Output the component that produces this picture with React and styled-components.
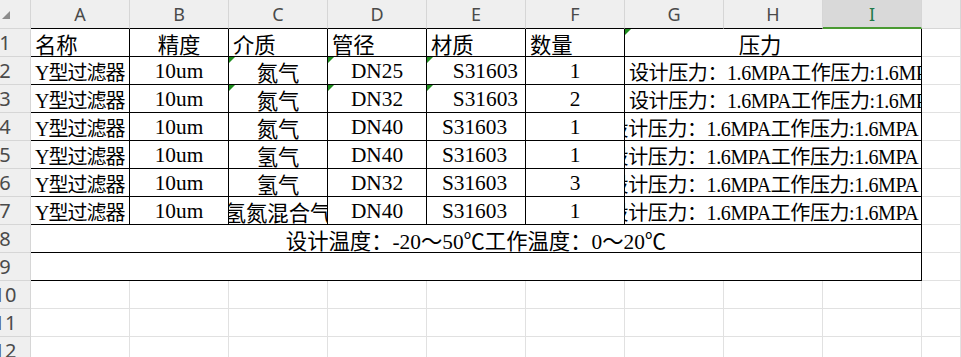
import { Fragment } from 'react'
import styled, { createGlobalStyle, css } from 'styled-components'

const GlobalStyle = createGlobalStyle`
  html, body {
    margin: 0;
    padding: 0;
    background: #fff;
    overflow: hidden;
  }
`

const COLUMNS = ['A', 'B', 'C', 'D', 'E', 'F', 'G', 'H', 'I']
const ACTIVE_COLUMN = 'I'
const PRESSURE = '设计压力：1.6MPA工作压力:1.6MPA'
const TEMPERATURE = '设计温度：-20～50℃工作温度：0～20℃'

const ITEMS = [
  { medium: '氮气', size: 'DN25', qty: '1', asText: true },
  { medium: '氮气', size: 'DN32', qty: '2', asText: true },
  { medium: '氮气', size: 'DN40', qty: '1' },
  { medium: '氢气', size: 'DN40', qty: '1' },
  { medium: '氢气', size: 'DN32', qty: '3' },
  { medium: '氢氮混合气', size: 'DN40', qty: '1' },
]

const justify = { left: 'flex-start', center: 'center', right: 'flex-end' }

export default function App() {
  return (
    <>
      <GlobalStyle />
      <Sheet>
        <Corner>
          <svg width="8" height="8" viewBox="0 0 8 8">
            <polygon points="8,0 8,8 0,8" fill="#8c8c8c" />
          </svg>
        </Corner>
        {COLUMNS.map(c => (
          <ColumnHeader key={c} $active={c === ACTIVE_COLUMN}>{c}</ColumnHeader>
        ))}
        <ColumnHeader $outside />

        <RowHeader>1</RowHeader>
        <Cell>名称</Cell>
        <Cell $align="center">精度</Cell>
        <Cell>介质</Cell>
        <Cell>管径</Cell>
        <Cell>材质</Cell>
        <Cell>数量</Cell>
        <Cell $span={3} $align="center" $shift={30} $flag>压力</Cell>
        <Blank />

        {ITEMS.map((item, i) => (
          <Fragment key={i}>
            <RowHeader>{i + 2}</RowHeader>
            <Cell $small $tight={1}>Y型过滤器</Cell>
            <Cell $align="center">10um</Cell>
            <Cell $align="center" $flag={item.asText}><span>{item.medium}</span></Cell>
            <Cell $align="center" $flag={item.asText}>{item.size}</Cell>
            <Cell $align={item.asText ? 'right' : 'center'} $shift={7} $flag={item.asText}>S31603</Cell>
            <Cell $align="center">{item.qty}</Cell>
            <Cell
              $span={3}
              $small
              $tight={0.4}
              $align={item.asText ? 'left' : 'center'}
              $shift={item.asText ? 4 : 23}
            >
              <span>{PRESSURE}</span>
            </Cell>
            <Blank />
          </Fragment>
        ))}

        <RowHeader>8</RowHeader>
        <Cell $span={9} $align="center">{TEMPERATURE}</Cell>
        <Blank />

        <RowHeader>9</RowHeader>
        <Cell $span={9} />
        <Blank />

        {[10, 11, 12].map(n => (
          <Fragment key={n}>
            <RowHeader>{n}</RowHeader>
            {COLUMNS.map(c => <Blank key={c} />)}
            <Blank />
          </Fragment>
        ))}
      </Sheet>
    </>
  )
}

const Sheet = styled.div`
  display: grid;
  grid-template-columns: 31px repeat(9, 99px) 1fr;
  grid-template-rows: 29px repeat(12, 28px);
  width: 961px;
  height: 357px;
  overflow: hidden;
  background: #fff;
`

const Corner = styled.div`
  box-sizing: border-box;
  padding: 11px 0 0 2px;
  background: #efefef;
  border-right: 1px solid #d6d6d6;
  border-bottom: 1px solid #d6d6d6;

  svg {
    display: block;
  }
`

const ColumnHeader = styled.div`
  box-sizing: border-box;
  display: flex;
  align-items: center;
  justify-content: center;
  background: ${p => (p.$active ? '#d9d9d9' : '#efefef')};
  border-right: 1px solid #d6d6d6;
  border-bottom: ${p =>
    p.$active ? '2px solid #4a9a32' : p.$outside ? '1px solid #d6d6d6' : '1px solid #000'};
  padding-top: ${p => (p.$active ? 1 : 0)}px;
  font-family: "Noto Sans", "Liberation Sans", sans-serif;
  font-size: 18px;
  color: ${p => (p.$active ? '#1f7a4a' : '#4a4a4a')};
`

const RowHeader = styled.div`
  box-sizing: border-box;
  display: flex;
  align-items: center;
  justify-content: center;
  padding-right: 20px;
  overflow: hidden;
  white-space: nowrap;
  background: #efefef;
  border-right: 1px solid #d6d6d6;
  border-bottom: 1px solid #d6d6d6;
  font-family: "Noto Sans", "Liberation Sans", sans-serif;
  font-size: 20px;
  color: #4a4a4a;
`

const Cell = styled.div`
  grid-column: span ${p => p.$span || 1};
  position: relative;
  box-sizing: border-box;
  display: flex;
  align-items: center;
  justify-content: ${p => justify[p.$align || 'left']};
  padding: 1px ${p => p.$shift ?? 4}px 0 4px;
  overflow: hidden;
  white-space: nowrap;
  border-right: 1px solid #000;
  border-bottom: 1px solid #000;
  font-family: "Liberation Serif", "Noto Sans CJK SC", serif;
  font-size: ${p => (p.$small ? '20px' : '21.33px')};
  letter-spacing: ${p => (p.$tight ? `-${p.$tight}px` : 'normal')};
  color: #000;

  span {
    flex: none;
  }

  ${p =>
    p.$flag &&
    css`
      &::before {
        content: '';
        position: absolute;
        top: 0;
        left: 0;
        border-style: solid;
        border-width: 6px 6px 0 0;
        border-color: #1e8c1e transparent transparent transparent;
      }
    `}
`

const Blank = styled.div`
  box-sizing: border-box;
  border-right: 1px solid #e1e1e1;
  border-bottom: 1px solid #e1e1e1;
`
